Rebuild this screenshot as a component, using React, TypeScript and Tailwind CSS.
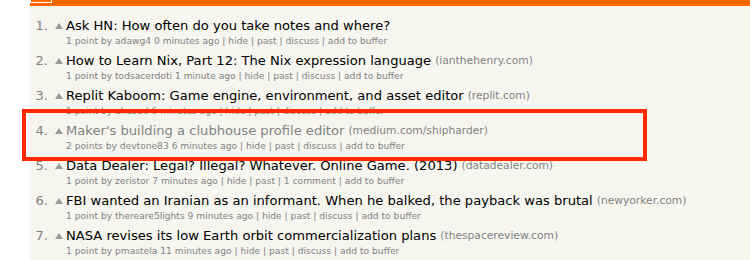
import React from 'react'

interface Story {
  rank: number
  title: string
  site?: string
  points: number
  user: string
  age: string
  comments: string
  visited?: boolean
}

const stories: Story[] = [
  { rank: 1, title: 'Ask HN: How often do you take notes and where?', points: 1, user: 'adawg4', age: '0 minutes ago', comments: 'discuss' },
  { rank: 2, title: 'How to Learn Nix, Part 12: The Nix expression language', site: 'ianthehenry.com', points: 1, user: 'todsacerdoti', age: '1 minute ago', comments: 'discuss' },
  { rank: 3, title: 'Replit Kaboom: Game engine, environment, and asset editor', site: 'replit.com', points: 1, user: 'ahasud', age: '6 minutes ago', comments: 'discuss' },
  { rank: 4, title: "Maker's building a clubhouse profile editor", site: 'medium.com/shipharder', points: 2, user: 'devtone83', age: '6 minutes ago', comments: 'discuss', visited: true },
  { rank: 5, title: 'Data Dealer: Legal? Illegal? Whatever. Online Game. (2013)', site: 'datadealer.com', points: 1, user: 'zeristor', age: '7 minutes ago', comments: '1 comment' },
  { rank: 6, title: 'FBI wanted an Iranian as an informant. When he balked, the payback was brutal', site: 'newyorker.com', points: 1, user: 'thereare5lights', age: '9 minutes ago', comments: 'discuss' },
  { rank: 7, title: 'NASA revises its low Earth orbit commercialization plans', site: 'thespacereview.com', points: 1, user: 'pmastela', age: '11 minutes ago', comments: 'discuss' },
]

function StoryRow({ story }: { story: Story }): React.ReactElement {
  return (
    <div className="pb-[5px]">
      {/* Title line */}
      <div className="flex items-start h-[18px] leading-[18px] text-[13.1px] whitespace-nowrap">
        <span className="w-[18px] text-right text-[#828282]">{story.rank}.</span>
        <svg width="8" height="6" viewBox="0 0 8 6" className="ml-[7px] mt-[6px] flex-none">
          <polygon points="4,0 8,6 0,6" fill="#9a9a9a" />
        </svg>
        <span className={`ml-[3px] ${story.visited ? 'text-[#828282]' : 'text-black'}`}>{story.title}</span>
        {story.site && (
          <span className="ml-[4px] text-[10.7px] text-[#828282]">({story.site})</span>
        )}
      </div>

      {/* Subtext */}
      <div className="pl-[36px] h-[12px] leading-[12px] text-[9.15px] text-[#828282] whitespace-nowrap">
        {story.points} {story.points === 1 ? 'point' : 'points'} by {story.user} {story.age} | hide | past | {story.comments} | add to buffer
      </div>
    </div>
  )
}

export default function App(): React.ReactElement {
  return (
    <div className="relative w-[750px] h-[260px] overflow-hidden bg-white" style={{ fontFamily: '"DejaVu Sans", Verdana, sans-serif' }}>
      <div className="ml-[30px] h-full bg-[#f6f6ef]">
        {/* Header bar */}
        <div className="flex items-end h-[6px] overflow-hidden bg-[#ff6600]">
          <div className="flex-none w-[22px] h-[20px] mb-[3px] border border-white" />
        </div>

        {/* Stories */}
        <div className="pt-[11px]">
          {stories.map((s) => (
            <StoryRow key={s.rank} story={s} />
          ))}
        </div>
      </div>

      {/* Highlight box */}
      <div className="absolute left-[22px] top-[109px] w-[625px] h-[52px] border-4 border-[#ff2a00]" />
    </div>
  )
}
